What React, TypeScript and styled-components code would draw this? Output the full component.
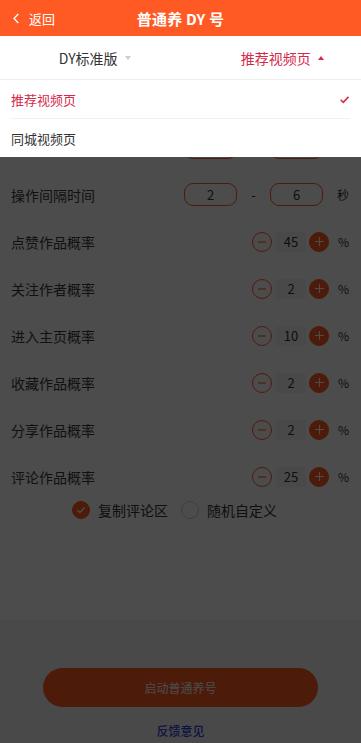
import React from "react";
import styled, { createGlobalStyle } from "styled-components";

const ORANGE = "#ff5a24";
const CRIMSON = "#d6284a";

const GlobalStyle = createGlobalStyle`
  body {
    margin: 0;
    font-family: "Noto Sans CJK SC", "Noto Sans", sans-serif;
    background: #f5f5f5;
  }
`;

const Page = styled.div`
  position: relative;
  width: 361px;
  height: 743px;
  overflow: hidden;
  display: flex;
  flex-direction: column;
  background: #f5f5f5;
`;

const Header = styled.div`
  height: 36px;
  background: ${ORANGE};
  display: grid;
  grid-template-columns: 1fr auto 1fr;
  align-items: center;
  color: #fff;
`;

const Back = styled.div`
  display: flex;
  align-items: center;
  gap: 10px;
  padding-left: 13px;
  font-size: 13px;
`;

const Title = styled.div`
  font-size: 15px;
  font-weight: 700;
  letter-spacing: 0.2px;
`;

const Tabs = styled.div`
  height: 43px;
  background: #fff;
  border-bottom: 1px solid #eee;
  display: flex;
`;

const Tab = styled.div<{ $active?: boolean; $shift?: number }>`
  flex: 1;
  display: flex;
  align-items: center;
  justify-content: center;
  gap: 7px;
  padding-left: ${(p) => p.$shift ?? 0}px;
  font-size: 14px;
  color: ${(p) => (p.$active ? CRIMSON : "#333")};
`;

const Caret = styled.span<{ $up?: boolean; $color: string }>`
  width: 0;
  height: 0;
  border-left: 3.5px solid transparent;
  border-right: 3.5px solid transparent;
  ${(p) =>
    p.$up
      ? `border-bottom: 4px solid ${p.$color};`
      : `border-top: 4px solid ${p.$color};`}
`;

const Card = styled.div`
  background: #fff;
  padding: 0 11px 0 11px;
  height: 540px;
`;

const Row = styled.div<{ $h?: number }>`
  height: ${(p) => p.$h ?? 47}px;
  display: flex;
  align-items: center;
  justify-content: space-between;
`;

const Label = styled.div`
  font-size: 14px;
  color: #3a3a3a;
`;

const Controls = styled.div`
  display: flex;
  align-items: center;
`;

const RangeInput = styled.div`
  width: 51px;
  height: 21px;
  border: 1px solid ${ORANGE};
  border-radius: 9px;
  display: flex;
  align-items: center;
  justify-content: center;
  font-size: 13px;
  color: #333;
`;

const Dash = styled.span`
  width: 33px;
  text-align: center;
  font-size: 13px;
  color: #333;
`;

const Unit = styled.span<{ $w?: number }>`
  width: ${(p) => p.$w ?? 26}px;
  text-align: right;
  font-size: 12px;
  color: #333;
  padding-right: 1px;
`;

const Circle = styled.div<{ $filled?: boolean }>`
  width: 20px;
  height: 20px;
  border-radius: 50%;
  box-sizing: border-box;
  border: 1px solid ${ORANGE};
  background: ${(p) => (p.$filled ? ORANGE : "transparent")};
  display: flex;
  align-items: center;
  justify-content: center;
`;

const Value = styled.div`
  width: 30px;
  height: 20px;
  margin: 0 3px 0 4px;
  background: #f4f4f4;
  display: flex;
  align-items: center;
  justify-content: center;
  font-size: 13px;
  color: #333;
`;

const Options = styled.div`
  display: flex;
  justify-content: center;
  align-items: center;
  gap: 13px;
  height: 22px;
  margin-top: -1px;
  padding-right: 12px;
`;

const Option = styled.div`
  display: flex;
  align-items: center;
  gap: 8px;
  font-size: 14px;
  color: #333;
`;

const Radio = styled.div<{ $checked?: boolean }>`
  width: 18px;
  height: 18px;
  border-radius: 50%;
  box-sizing: border-box;
  border: 1px solid ${(p) => (p.$checked ? ORANGE : "#ccc")};
  background: ${(p) => (p.$checked ? ORANGE : "#fff")};
  display: flex;
  align-items: center;
  justify-content: center;
`;

const Footer = styled.div`
  flex: 1;
  display: flex;
  flex-direction: column;
  align-items: center;
  padding-top: 48px;
`;

const StartButton = styled.div`
  width: 275px;
  height: 39px;
  border-radius: 20px;
  background: ${ORANGE};
  color: #fff;
  font-size: 12px;
  display: flex;
  align-items: center;
  justify-content: center;
`;

const Feedback = styled.div`
  margin-top: 15px;
  font-size: 12px;
  font-weight: 500;
  color: #2f45d8;
`;

const Mask = styled.div`
  position: absolute;
  left: 0;
  right: 0;
  top: 80px;
  bottom: 0;
  background: rgba(0, 0, 0, 0.7);
`;

const Dropdown = styled.div`
  position: absolute;
  left: 0;
  right: 0;
  top: 80px;
  background: #fff;
  padding: 0 11px;
`;

const Item = styled.div<{ $active?: boolean; $last?: boolean }>`
  height: 38px;
  display: flex;
  align-items: center;
  justify-content: space-between;
  font-size: 13px;
  color: ${(p) => (p.$active ? CRIMSON : "#333")};
  border-bottom: ${(p) => (p.$last ? "none" : "1px solid #f2f2f2")};
`;

const Minus = () => (
  <svg width="10" height="10" viewBox="0 0 10 10">
    <path d="M1 5h8" stroke={ORANGE} strokeWidth="1.1" />
  </svg>
);

const Plus = () => (
  <svg width="11" height="11" viewBox="0 0 11 11">
    <path d="M1 5.5h9M5.5 1v9" stroke="#fff" strokeWidth="1.1" />
  </svg>
);

const Check = ({ color, w = 10 }: { color: string; w?: number }) => (
  <svg width={w} height={w} viewBox="0 0 10 10">
    <path d="M1.5 5.2l2.4 2.4L8.6 2.6" stroke={color} strokeWidth="1.4" fill="none" />
  </svg>
);

const steps = [
  { label: "点赞作品概率", value: 45 },
  { label: "关注作者概率", value: 2 },
  { label: "进入主页概率", value: 10 },
  { label: "收藏作品概率", value: 2 },
  { label: "分享作品概率", value: 2 },
  { label: "评论作品概率", value: 25 },
];

export default function App() {
  return (
    <>
      <GlobalStyle />
      <Page>
        <Header>
          <Back>
            <svg width="6" height="11" viewBox="0 0 6 11">
              <path d="M5.3 1L1 5.5L5.3 10" stroke="#fff" strokeWidth="1.3" fill="none" />
            </svg>
            返回
          </Back>
          <Title>普通养 DY 号</Title>
          <div />
        </Header>
        <Tabs>
          <Tab $shift={16}>
            DY标准版
            <Caret $color="#ccc" />
          </Tab>
          <Tab $active $shift={30}>
            推荐视频页
            <Caret $up $color={CRIMSON} />
          </Tab>
        </Tabs>
        <Card>
          <Row $h={44}>
            <Label>养号时长</Label>
            <Controls>
              <RangeInput>10</RangeInput>
              <Dash>-</Dash>
              <RangeInput>20</RangeInput>
              <Unit>分</Unit>
            </Controls>
          </Row>
          <Row>
            <Label>观看视频时长</Label>
            <Controls>
              <RangeInput>5</RangeInput>
              <Dash>-</Dash>
              <RangeInput>15</RangeInput>
              <Unit>秒</Unit>
            </Controls>
          </Row>
          <Row>
            <Label>操作间隔时间</Label>
            <Controls>
              <RangeInput>2</RangeInput>
              <Dash>-</Dash>
              <RangeInput>6</RangeInput>
              <Unit>秒</Unit>
            </Controls>
          </Row>
          {steps.map((s) => (
            <Row key={s.label}>
              <Label>{s.label}</Label>
              <Controls>
                <Circle>
                  <Minus />
                </Circle>
                <Value>{s.value}</Value>
                <Circle $filled>
                  <Plus />
                </Circle>
                <Unit $w={20}>%</Unit>
              </Controls>
            </Row>
          ))}
          <Options>
            <Option>
              <Radio $checked>
                <Check color="#fff" />
              </Radio>
              复制评论区
            </Option>
            <Option>
              <Radio />
              随机自定义
            </Option>
          </Options>
        </Card>
        <Footer>
          <StartButton>启动普通养号</StartButton>
          <Feedback>反馈意见</Feedback>
        </Footer>
        <Mask />
        <Dropdown>
          <Item $active>
            推荐视频页
            <Check color={CRIMSON} w={11} />
          </Item>
          <Item $last>同城视频页</Item>
        </Dropdown>
      </Page>
    </>
  );
}
